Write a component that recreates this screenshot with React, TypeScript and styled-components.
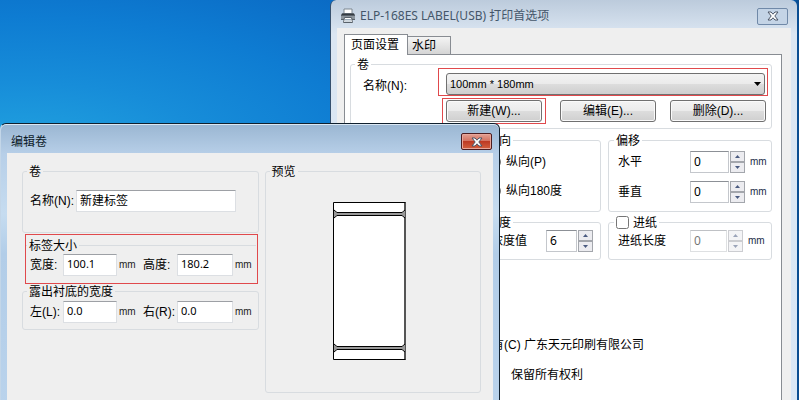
import React, { useId } from "react";
import styled, { createGlobalStyle, css } from "styled-components";

const ui = '"Liberation Sans", "Noto Sans CJK SC", sans-serif';
const numeric = '"Noto Sans", "Noto Sans CJK SC", sans-serif';
const caption = '"Noto Sans", "Noto Sans CJK SC", sans-serif';

const GlobalStyle = createGlobalStyle`
  * { box-sizing: border-box; }
  body { margin: 0; font: 12px/16px ${ui}; color: #000; }
  button, input, select { font: inherit; color: inherit; margin: 0; }
  p { margin: 0; }
`;

const Desktop = styled.main`
  position: relative;
  min-height: 100vh;
  overflow: hidden;
  background:
    linear-gradient(90deg, transparent 99%, #0a4a8c 100%),
    radial-gradient(ellipse 640px 260px at 20px 160px, #23a6e0 0%, #178dd9 30%, #0e7cd2 55%, #0a6ac4 80%, #0561b8 100%);
`;

const PrefsWindow = styled.section`
  position: absolute;
  top: 0;
  left: 330px;
  right: 2px;
  bottom: -12px;
  display: flex;
  flex-direction: column;
  padding: 0 6px;
  border-left: 1px solid #35506e;
  border-radius: 6px 6px 0 0;
  background: linear-gradient(180deg, #bccbdc 0, #dbe6f2 34px, #d9e7f6 100%);
`;

const EditWindow = styled.section`
  position: absolute;
  top: 123px;
  left: 0;
  width: 500px;
  bottom: -12px;
  display: flex;
  flex-direction: column;
  padding: 0 6px;
  border: 1px solid #10202e;
  border-left-color: #c3d6e8;
  border-radius: 6px 6px 0 0;
  background: linear-gradient(180deg, #9ab6d2 0, #b7cfe8 30px, #c6dcf0 90px, #b2cde8 130px, #bad3ec 100%);
  box-shadow: inset 0 1px #dbe8f4;
`;

const TitleBar = styled.header<{ $tall?: boolean }>`
  flex: none;
  display: flex;
  align-items: center;
  gap: 4px;
  height: ${(p) => (p.$tall ? 29 : 28)}px;
  padding: ${(p) => (p.$tall ? "6px 1px 0 4px" : "4px 3px 0")};
`;

const Title = styled.h1<{ $muted?: boolean }>`
  flex: 1;
  margin: 0;
  font: 400 12px/16px ${caption};
  color: ${(p) => (p.$muted ? "#44566a" : "#0c1a28")};
`;

const CloseButton = styled.button<{ $active?: boolean }>`
  display: grid;
  place-items: center;
  width: 31px;
  height: 17px;
  padding: 0;
  border-radius: 2px;
  border: 1px solid #7089a8;
  background: #c4d4e6;
  ${(p) =>
    p.$active &&
    css`
      border-color: #4c1d20;
      background: linear-gradient(180deg, #e2a093 0, #d3705e 48%, #bd3a24 50%, #d2603f 100%);
      box-shadow: inset 0 0 0 1px #e8a69a;
    `}
`;

const Client = styled.div`
  flex: 1;
  background: #efefef;
`;

const TabStrip = styled.div`
  display: flex;
  align-items: flex-end;
  height: 26px;
  padding-left: 7px;
`;

const Tab = styled.button<{ $active?: boolean }>`
  height: ${(p) => (p.$active ? 21 : 18)}px;
  width: ${(p) => (p.$active ? 64 : 43)}px;
  padding: 0 0 0 ${(p) => (p.$active ? 6 : 4)}px;
  margin-bottom: ${(p) => (p.$active ? -1 : 0)}px;
  position: relative;
  text-align: left;
  line-height: 16px;
  border: 1px solid #888c92;
  border-bottom: 0;
  border-left-width: ${(p) => (p.$active ? 1 : 0)}px;
  background: ${(p) => (p.$active ? "#fff" : "linear-gradient(180deg, #f4f4f4, #d5d5d5)")};
`;

const TabPage = styled.div`
  height: 420px;
  margin: 0 9px 0 7px;
  padding: 9px 9px 0 5px;
  border: 1px solid #888c92;
  background: #fff;
`;

const Group = styled.fieldset<{ $pad: string }>`
  min-width: 0;
  margin: 0;
  padding: ${(p) => p.$pad};
  border: 1px solid #d8dce0;
  border-radius: 3px;
`;

const Legend = styled.legend<{ $shift?: number }>`
  display: flex;
  align-items: center;
  gap: 4px;
  height: 0;
  padding: 0 2px;
  margin-left: ${(p) => p.$shift ?? -3}px;
  line-height: 0;
  white-space: nowrap;
`;

const Mark = styled.div<{ $pad: string }>`
  padding: ${(p) => p.$pad};
  border: 1px solid #e0494c;
`;

const PrinterRow = styled.div`
  display: grid;
  grid-template-columns: 75px 1fr;
  align-items: end;
  label { line-height: 20px; }
`;

const Combo = styled.div`
  position: relative;
  select {
    display: block;
    width: 100%;
    height: 22px;
    padding: 0 3px;
    appearance: none;
    font-family: ${ui};
    font-size: 11px;
    border: 1px solid #707070;
    border-radius: 3px;
    background: linear-gradient(180deg, #f3f3f3 0, #ebebeb 48%, #dddddd 50%, #cfcfcf 100%);
  }
  svg { position: absolute; right: 4px; top: 9px; pointer-events: none; }
`;

const ButtonRow = styled.div`
  display: flex;
  align-items: center;
  gap: 14px;
  margin: 2px 0 0 79px;
`;

const PushButton = styled.button`
  display: block;
  width: 96px;
  height: 22px;
  padding: 0;
  border: 1px solid #707070;
  border-radius: 3px;
  background: linear-gradient(180deg, #f3f3f3 0, #ebebeb 48%, #dddddd 50%, #cfcfcf 100%);
  box-shadow: inset 0 0 0 1px #fafafa;
`;

const Options = styled.div`
  display: grid;
  grid-template-columns: 121px 164px;
  justify-content: end;
  gap: 10px 7px;
  margin-top: 11px;
`;

const RadioRow = styled.label`
  display: flex;
  align-items: center;
  gap: 5px;
  height: 29px;
  input { width: 12px; height: 12px; }
`;

const Field = styled.div<{ $label: number }>`
  display: grid;
  grid-template-columns: ${(p) => p.$label}px auto 1fr;
  align-items: center;
  min-height: 30px;
  white-space: nowrap;
`;

const Spinner = styled.div<{ $width: number; $disabled?: boolean }>`
  display: flex;
  align-items: center;
  gap: 1px;
  opacity: ${(p) => (p.$disabled ? 0.55 : 1)};
  input {
    width: ${(p) => p.$width}px;
    height: 22px;
    padding: 0 3px 2px;
    font-family: ${numeric};
    border: 1px solid #c4c7cc;
    border-top-color: #8c9096;
    background: #fff;
  }
`;

const Steps = styled.div`
  display: grid;
  button {
    display: grid;
    place-items: center;
    width: 15px;
    height: 11px;
    padding: 0;
    border: 1px solid #a3a6ac;
    background: #ececf0;
  }
`;

const Unit = styled.span<{ $blue?: boolean; $indent: number }>`
  padding-left: ${(p) => p.$indent}px;
  font: 10px/16px ${ui};
  color: ${(p) => (p.$blue ? "#1c2c48" : "#222")};
`;

const Check = styled.input`
  width: 13px;
  height: 13px;
`;

const Rights = styled.footer`
  padding: 70px 0 0 106px;
  line-height: 30px;
  white-space: nowrap;
  p + p { padding-left: 55px; }
`;

const EditBody = styled.div`
  display: grid;
  grid-template-columns: 236fr 216fr;
  gap: 6px;
  height: 100%;
  padding: 18px 12px 0 15px;
  align-items: start;
`;

const NameRow = styled.div`
  display: grid;
  grid-template-columns: 46px 160px;
  align-items: center;
`;

const TextBox = styled.input<{ $numeric?: boolean }>`
  width: 100%;
  min-width: 0;
  height: 22px;
  padding: 0 3px 4px;
  font-family: ${(p) => (p.$numeric ? numeric : ui)};
  font-size: ${(p) => (p.$numeric ? 11 : 12)}px;
  border: 1px solid #dcdfe3;
  border-top-color: #9da0a5;
  background: #fff;
`;

const SizeRow = styled.div`
  display: grid;
  grid-template-columns: 33px 54px 26px 34px 56px 1fr;
  align-items: center;
  white-space: nowrap;
`;

const SizeMark = styled(Mark)`
  margin: 1px 1px 7px 3px;
`;

const SizeGroup = styled(Group)`
  border-width: 1px 0 0;
  border-radius: 0;
`;

const PreviewGroup = styled(Group)`
  display: block;
  svg { display: block; margin: 0 auto; }
`;

const PrinterIcon = () => (
  <svg width="16" height="16" viewBox="0 0 16 16" aria-hidden="true">
    <path d="M4 1h8v5H4z" fill="#fff" stroke="#7d8790" />
    <path d="M1 6.5 2.5 5h11L15 6.5V12H1z" fill="#59626b" />
    <path d="M1 8h14v3H1z" fill="#8d969e" />
    <path d="M2 6.5h12" stroke="#343b42" />
    <path d="M4.500 9.500h7l1 5h-9z" fill="#fff" stroke="#59626b" />
    <path d="M5 11.500h6M5 13h6" stroke="#9fb0be" />
  </svg>
);

const CloseIcon = () => (
  <svg width="12" height="10" viewBox="0 0 12 10" aria-hidden="true">
    <path d="M1 1h3l2 2.200L8 1h3L7.800 5 11 9H8L6 6.800 4 9H1l3.200-4z" fill="#fff" stroke="#4b5566" />
  </svg>
);

const Arrow = ({ up, wide }: { up?: boolean; wide?: boolean }) => (
  <svg width={wide ? 7 : 5} height={wide ? 4 : 3} viewBox="0 0 7 4" aria-hidden="true">
    <path d={up ? "M0 4h7L3.500 0z" : "M0 0h7L3.500 4z"} fill={wide ? "#000" : "#4a5a80"} />
  </svg>
);

const LabelPreview = () => (
  <svg width="73" height="158" viewBox="0 0 73 158" role="img" aria-label="预览">
    <path d="M.5.5h72v157H.5z" fill="#fff" stroke="#000" />
    <path d="M72 1v156" stroke="#555" strokeWidth="2" />
    {[12, 146].map((y) => (
      <g key={y}>
        <path d={`M1 ${y - 4}l3 3h65l3-3v8l-3-3H4l-3 3z`} fill="#999" />
        <path d={`M1 ${y - 4}l3 2.500h65l3-2.500M1 ${y + 4}l3-2.500h65l3 2.500`} fill="none" stroke="#000" />
      </g>
    ))}
  </svg>
);

type SpinProps = { label: string; value: string; labelWidth: number; width: number; unit?: boolean; disabled?: boolean };

const SpinField = ({ label, value, labelWidth, width, unit, disabled }: SpinProps) => {
  const id = useId();
  return (
    <Field $label={labelWidth}>
      <label htmlFor={id}>{label}</label>
      <Spinner $width={width} $disabled={disabled}>
        <input id={id} defaultValue={value} disabled={disabled} />
        <Steps>
          <button type="button" aria-label={`${label} +`} disabled={disabled}><Arrow up /></button>
          <button type="button" aria-label={`${label} -`} disabled={disabled}><Arrow /></button>
        </Steps>
      </Spinner>
      {unit && <Unit $blue $indent={5}>mm</Unit>}
    </Field>
  );
};

const SizeFields = ({ items }: { items: [string, string][] }) => {
  const id = useId();
  return (
    <SizeRow>
      {items.map(([label, value]) => (
        <React.Fragment key={label}>
          <label htmlFor={id + label}>{label}</label>
          <TextBox id={id + label} $numeric defaultValue={value} />
          <Unit $indent={2}>mm</Unit>
        </React.Fragment>
      ))}
    </SizeRow>
  );
};

export default function App() {
  return (
    <Desktop>
      <GlobalStyle />
      <PrefsWindow>
        <TitleBar>
          <PrinterIcon />
          <Title $muted>ELP-168ES LABEL(USB) 打印首选项</Title>
          <CloseButton aria-label="关闭"><CloseIcon /></CloseButton>
        </TitleBar>
        <Client>
          <TabStrip role="tablist">
            <Tab role="tab" aria-selected $active>页面设置</Tab>
            <Tab role="tab">水印</Tab>
          </TabStrip>
          <TabPage role="tabpanel">
            <Group $pad="3px 3px 4px 12px">
              <Legend $shift={-8}>卷</Legend>
              <PrinterRow>
                <label htmlFor="stock">名称(N):</label>
                <Mark $pad="4px 2px 0 7px">
                  <Combo>
                    <select id="stock"><option>100mm * 180mm</option></select>
                    <Arrow wide />
                  </Combo>
                </Mark>
              </PrinterRow>
              <ButtonRow>
                <Mark $pad="1px 3px"><PushButton>新建(W)...</PushButton></Mark>
                <PushButton>编辑(E)...</PushButton>
                <PushButton>删除(D)...</PushButton>
              </ButtonRow>
            </Group>
            <Options>
              <Group $pad="6px 8px">
                <Legend $shift={-4}>方向</Legend>
                <RadioRow><input type="radio" name="direction" />纵向(P)</RadioRow>
                <RadioRow><input type="radio" name="direction" />纵向180度</RadioRow>
              </Group>
              <Group $pad="6px 4px 4px 9px">
                <Legend $shift={-4}>偏移</Legend>
                <SpinField label="水平" value="0" labelWidth={72} width={39} unit />
                <SpinField label="垂直" value="0" labelWidth={72} width={39} unit />
              </Group>
              <Group $pad="3px 8px 3px 10px">
                <Legend $shift={-6}>浓度</Legend>
                <SpinField label="浓度值" value="6" labelWidth={55} width={31} />
              </Group>
              <Group $pad="3px 4px 3px 9px">
                <Legend $shift={-4}><Check type="checkbox" id="feed" /><label htmlFor="feed">进纸</label></Legend>
                <SpinField label="进纸长度" value="0" labelWidth={72} width={37} unit disabled />
              </Group>
            </Options>
            <Rights>
              <p>版权所有(C) 广东天元印刷有限公司</p>
              <p>保留所有权利</p>
            </Rights>
          </TabPage>
        </Client>
      </PrefsWindow>

      <EditWindow>
        <TitleBar $tall>
          <Title>编辑卷</Title>
          <CloseButton $active aria-label="关闭"><CloseIcon /></CloseButton>
        </TitleBar>
        <Client>
          <EditBody>
            <div>
              <Group $pad="18px 7px 20px">
                <Legend>卷</Legend>
                <NameRow>
                  <label htmlFor="roll">名称(N):</label>
                  <TextBox id="roll" defaultValue="新建标签" />
                </NameRow>
              </Group>
              <SizeMark $pad="10px 1px 7px 0">
                <SizeGroup $pad="8px 0 0 4px">
                  <Legend>标签大小</Legend>
                  <SizeFields items={[["宽度:", "100.1"], ["高度:", "180.2"]]} />
                </SizeGroup>
              </SizeMark>
              <Group $pad="9px 0 6px 7px">
                <Legend>露出衬底的宽度</Legend>
                <SizeFields items={[["左(L):", "0.0"], ["右(R):", "0.0"]]} />
              </Group>
            </div>
            <PreviewGroup $pad="30px 6px 32px 0">
              <Legend $shift={4}>预览</Legend>
              <LabelPreview />
            </PreviewGroup>
          </EditBody>
        </Client>
      </EditWindow>
    </Desktop>
  );
}
